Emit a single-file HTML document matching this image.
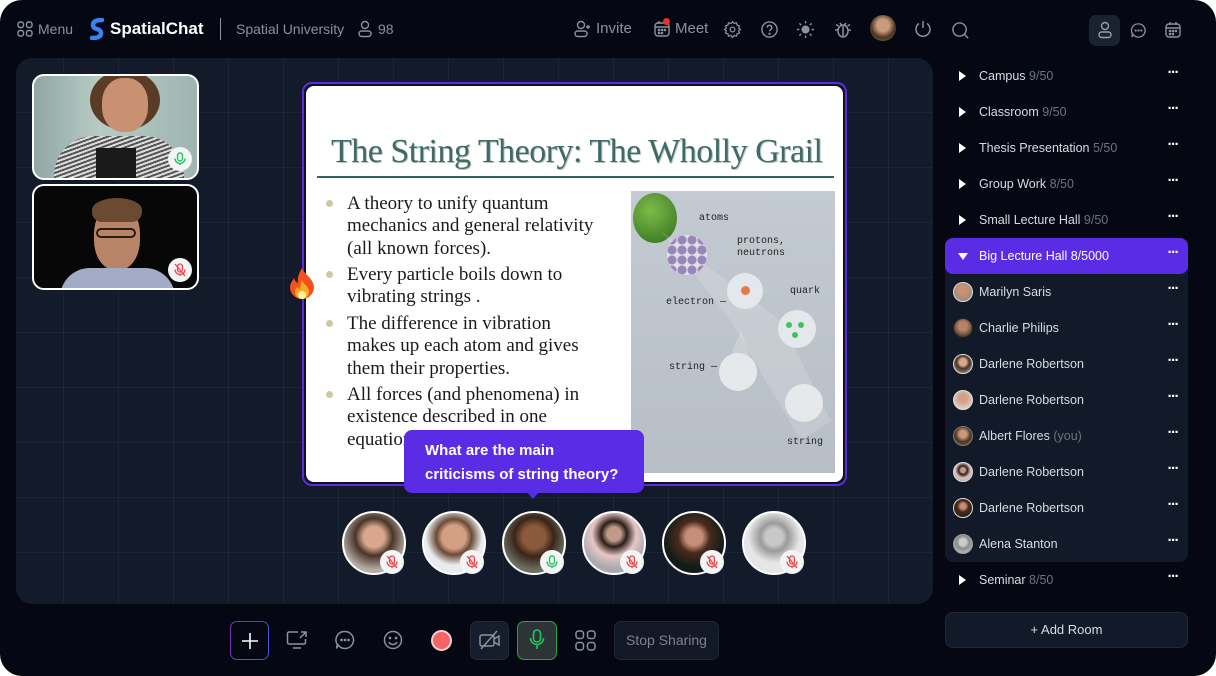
<!DOCTYPE html>
<html><head><meta charset="utf-8"><style>
*{margin:0;padding:0;box-sizing:border-box}
body{width:1216px;height:676px;background:#fff;font-family:"Liberation Sans",sans-serif;overflow:hidden;position:relative}
.app{position:absolute;left:0;top:0;width:1216px;height:676px;background:#050812;border-radius:22px;overflow:hidden}
.a{position:absolute}
.t{position:absolute;color:#8b919d;font-size:14px;white-space:nowrap}
.canvas{position:absolute;left:16px;top:58px;width:917px;height:546px;border-radius:16px;background-color:#131a2a;
background-image:linear-gradient(to right,rgba(255,255,255,.04) 1px,transparent 1px),linear-gradient(to bottom,rgba(255,255,255,.04) 1px,transparent 1px);
background-size:55px 55px;background-position:47px 54px}
.row{position:absolute;left:945px;width:243px;height:36px;font-size:12.5px;color:#d8dbe2}
.row .n{position:absolute;left:34px;top:11px;white-space:nowrap}
.row .n span{color:#6b7280}
.row .d{position:absolute;right:10px;top:6px;color:#fff;font-size:15px;letter-spacing:-1.5px;font-weight:bold}
.tri{position:absolute;left:14px;top:13px;width:0;height:0;border-left:7px solid #fff;border-top:5px solid transparent;border-bottom:5px solid transparent}
.av{position:absolute;left:8px;top:8px;width:20px;height:20px;border-radius:50%;border:1.5px solid #ddd}
.circ{position:absolute;top:511px;width:64px;height:64px;border-radius:50%;border:2px solid #fff}
.badge{position:absolute;width:24px;height:24px;border-radius:50%;background:#f3f4f6;display:flex;align-items:center;justify-content:center}
.bul{position:absolute;left:326px;width:7px;height:7px;border-radius:50%;background:#cfc9a1}
.sl{position:absolute;left:347px;font-family:"Liberation Serif",serif;font-size:19px;color:#1a1a1a;line-height:22.3px;white-space:nowrap}
</style></head><body><div class="app">
<svg class="a" style="left:17px;top:21px" width="16" height="16" viewBox="0 0 16 16" fill="none" stroke="#8b919d" stroke-width="1.4"><rect x="1" y="1" width="5.5" height="5.5" rx="2"/><rect x="9.5" y="1" width="5.5" height="5.5" rx="2"/><rect x="1" y="9.5" width="5.5" height="5.5" rx="2"/><rect x="9.5" y="9.5" width="5.5" height="5.5" rx="2"/></svg>
<div class="t" style="left:38px;top:21px">Menu</div>
<svg class="a" style="left:90px;top:18px" width="14" height="22" viewBox="0 0 14 22"><path d="M12 2 Q3 2 3 7 Q3 10 7 11 Q11 12 11 15 Q11 20 2 20" fill="none" stroke="#3b82f6" stroke-width="4.5" stroke-linecap="round"/></svg>
<div class="t" style="left:110px;top:19px;color:#fff;font-weight:bold;font-size:17px">SpatialChat</div>
<div class="a" style="left:220px;top:18px;width:1px;height:22px;background:#8b919d"></div>
<div class="t" style="left:236px;top:21px">Spatial University</div>
<svg class="a" style="left:357px;top:20px" width="16" height="18" viewBox="0 0 16 18" fill="none" stroke="#8b919d" stroke-width="1.4"><circle cx="8" cy="5" r="3.5"/><rect x="2" y="11" width="12" height="5.5" rx="2.7"/></svg>
<div class="t" style="left:378px;top:21px">98</div>
<svg class="a" style="left:573px;top:20px" width="20" height="18" viewBox="0 0 20 18" fill="none" stroke="#8b919d" stroke-width="1.4"><circle cx="8" cy="5" r="3.5"/><rect x="2" y="11" width="12" height="5.5" rx="2.7"/><path d="M15 5v4M13 7h4"/></svg>
<div class="t" style="left:596px;top:20px;font-size:15px">Invite</div>
<svg class="a" style="left:653px;top:20px" width="18" height="18" viewBox="0 0 18 18" fill="none" stroke="#8b919d" stroke-width="1.4"><rect x="2" y="3" width="14" height="13" rx="3"/><path d="M2 7h14M6 1v3M12 1v3"/><circle cx="6" cy="10" r=".6"/><circle cx="9" cy="10" r=".6"/><circle cx="12" cy="10" r=".6"/><circle cx="6" cy="13" r=".6"/><circle cx="9" cy="13" r=".6"/></svg>
<div class="a" style="left:663px;top:18px;width:7px;height:7px;border-radius:50%;background:#ef2b2b"></div>
<div class="t" style="left:675px;top:20px;font-size:15px">Meet</div>
<svg class="a" style="left:723px;top:20px" width="19" height="19" viewBox="0 0 24 24" fill="none" stroke="#8b919d" stroke-width="1.6"><circle cx="12" cy="12" r="3"/><path d="M12 2l2 2.5 3-1 .8 3 3 .9-1 3L22 12l-2.2 1.6 1 3-3 .9-.8 3-3-1L12 22l-2-2.5-3 1-.8-3-3-.9 1-3L2 12l2.2-1.6-1-3 3-.9.8-3 3 1z"/></svg>
<svg class="a" style="left:760px;top:20px" width="19" height="19" viewBox="0 0 20 20" fill="none" stroke="#8b919d" stroke-width="1.5"><circle cx="10" cy="10" r="8"/><path d="M7.6 8a2.4 2.4 0 1 1 3.4 2.2c-.7.4-1 .9-1 1.6"/><circle cx="10" cy="14.5" r=".5" fill="#8b919d"/></svg>
<svg class="a" style="left:796px;top:20px" width="19" height="19" viewBox="0 0 20 20" fill="#8b919d" stroke="#8b919d" stroke-width="1.5"><circle cx="10" cy="10" r="3.5"/><path d="M10 1v2.5M10 16.5V19M1 10h2.5M16.5 10H19M3.6 3.6l1.8 1.8M14.6 14.6l1.8 1.8M3.6 16.4l1.8-1.8M14.6 5.4l1.8-1.8"/></svg>
<svg class="a" style="left:834px;top:19px" width="18" height="20" viewBox="0 0 18 20" fill="none" stroke="#8b919d" stroke-width="1.5"><ellipse cx="9" cy="12" rx="5" ry="6"/><path d="M6 4l1.5 2M12 4l-1.5 2M4 11H1M17 11h-3M4.5 7 2 5.5M13.5 7 16 5.5M9 7v10"/></svg>
<div class="a" style="left:870px;top:15px;width:26px;height:26px;border-radius:50%;background:radial-gradient(circle at 50% 40%,#c99a7c 0 30%,#4a3322 60%,#7a7b5a)"></div>
<svg class="a" style="left:913px;top:19px" width="20" height="20" viewBox="0 0 20 20" fill="none" stroke="#8b919d" stroke-width="1.5"><path d="M10 2v7M6 4.5a7 7 0 1 0 8 0"/></svg>
<svg class="a" style="left:951px;top:21px" width="19" height="19" viewBox="0 0 20 20" fill="none" stroke="#8b919d" stroke-width="1.5"><circle cx="9" cy="9" r="7"/><path d="M14 14l4 4"/></svg>
<div class="a" style="left:1089px;top:15px;width:31px;height:31px;border-radius:7px;background:#1a2130"></div>
<svg class="a" style="left:1097px;top:21px" width="16" height="18" viewBox="0 0 16 18" fill="none" stroke="#9aa0ab" stroke-width="1.4"><circle cx="8" cy="5" r="3.5"/><rect x="2" y="11" width="12" height="5.5" rx="2.7"/></svg>
<svg class="a" style="left:1130px;top:22px" width="17" height="17" viewBox="0 0 18 18" fill="none" stroke="#8b919d" stroke-width="1.4"><path d="M9 2a7 7 0 1 1-5.6 11.2L2 16l.6-3.4A7 7 0 0 1 9 2z"/><circle cx="6" cy="9" r=".5"/><circle cx="9" cy="9" r=".5"/><circle cx="12" cy="9" r=".5"/></svg>
<svg class="a" style="left:1164px;top:21px" width="18" height="18" viewBox="0 0 18 18" fill="none" stroke="#8b919d" stroke-width="1.4"><rect x="2" y="3" width="14" height="13" rx="3"/><path d="M2 7h14M6 1v3M12 1v3"/><circle cx="6" cy="10" r=".6"/><circle cx="9" cy="10" r=".6"/><circle cx="12" cy="10" r=".6"/><circle cx="6" cy="13" r=".6"/><circle cx="9" cy="13" r=".6"/></svg>

<div class="canvas"></div>
<div class="a" style="left:32px;top:74px;width:167px;height:106px;border-radius:12px;border:2px solid #fff;overflow:hidden;background:linear-gradient(90deg,#8fa8a4,#b8cac6 40%,#9fb5b1)">
 <div class="a" style="left:56px;top:-6px;width:70px;height:60px;border-radius:50%;background:#5a3b26"></div>
 <div class="a" style="left:68px;top:2px;width:46px;height:54px;border-radius:45%;background:#c99072"></div>
 <div class="a" style="left:20px;top:60px;width:130px;height:60px;border-radius:40px 40px 0 0;background:repeating-linear-gradient(160deg,#ddd 0 2px,#555 2px 4px)"></div>
 <div class="a" style="left:62px;top:72px;width:40px;height:40px;background:#1a1a1a"></div>
</div>
<div class="badge" style="left:168px;top:147px"><svg width="12" height="14" viewBox="0 0 12 14" fill="none" stroke="#22c55e" stroke-width="1.4"><rect x="3.5" y="1" width="5" height="8" rx="2.5"/><path d="M1 6.5a5 5 0 0 0 10 0M6 11.5V13"/></svg></div>
<div class="a" style="left:32px;top:184px;width:167px;height:106px;border-radius:12px;border:2px solid #fff;overflow:hidden;background:#070707">
 <div class="a" style="left:60px;top:18px;width:46px;height:66px;border-radius:45%;background:#b88468"></div>
 <div class="a" style="left:58px;top:12px;width:50px;height:24px;border-radius:50% 50% 10px 10px;background:#6a4a30"></div>
 <div class="a" style="left:62px;top:42px;width:40px;height:10px;border:2px solid #2a1a12;border-radius:5px"></div>
 <div class="a" style="left:26px;top:82px;width:115px;height:30px;border-radius:30px 30px 0 0;background:#a3acc4"></div>
</div>
<div class="badge" style="left:168px;top:258px"><svg width="14" height="14" viewBox="0 0 14 14" fill="none" stroke="#ef4444" stroke-width="1.3"><rect x="4.5" y="1" width="5" height="8" rx="2.5"/><path d="M2 6.5a5 5 0 0 0 10 0M7 11.5V13M2 1l10 12"/></svg></div>
<div class="a" style="left:302px;top:82px;width:545px;height:404px;border-radius:10px;border:2px solid #5b2be0;background:#0e1220"></div>
<div class="a" style="left:306px;top:86px;width:537px;height:396px;border-radius:8px;background:#fff"></div>
<svg class="a" style="left:286px;top:266px" width="32" height="36" viewBox="0 0 32 36"><path d="M16 2c2 6 10 9 12 18a12 12 0 0 1-24 2c0-5 3-8 4-10 1 3 2 4 4 5-1-7 2-11 4-15z" fill="#f4511e"/><path d="M16 14c1 4 7 6 7 12a7 7 0 0 1-14 0c0-3 2-5 3-6 0 2 1 3 2 3 0-4 1-7 2-9z" fill="#ffa726"/><ellipse cx="16" cy="29" rx="4" ry="4" fill="#fff59d"/></svg>
<div class="a" style="left:331px;top:133px;font-family:'Liberation Serif',serif;font-size:34px;color:#3f6b66;white-space:nowrap;text-shadow:1px 1px 0 #b5c5c2;letter-spacing:-.5px">The String Theory: The Wholly Grail</div>
<div class="a" style="left:317px;top:176px;width:517px;height:2px;background:#2f6462"></div>
<div class="bul" style="top:200px"></div><div class="sl" style="top:193px">A theory to unify quantum<br>mechanics and general relativity<br>(all known forces).</div>
<div class="bul" style="top:271px"></div><div class="sl" style="top:264px">Every particle boils down to<br>vibrating strings .</div>
<div class="bul" style="top:320px"></div><div class="sl" style="top:313px">The difference in vibration<br>makes up each atom and gives<br>them their properties.</div>
<div class="bul" style="top:391px"></div><div class="sl" style="top:384px">All forces (and phenomena) in<br>existence described in one<br>equation.</div>
<div class="a" style="left:631px;top:191px;width:204px;height:282px;background:linear-gradient(180deg,#c3cad1,#b7bec6);overflow:hidden;font-family:'Liberation Mono',monospace;font-size:10px;color:#222">
 <div class="a" style="left:2px;top:2px;width:44px;height:50px;border-radius:50%;background:radial-gradient(circle at 40% 35%,#7dbb4a,#2f6e1c)"></div>
 <svg class="a" style="left:0;top:0" width="204" height="282"><path d="M30 40 L150 130 L200 230 L170 250 L100 130 Z" fill="#fff" opacity=".15"/><path d="M110 140 L120 170 L95 175 Z" fill="#fff" opacity=".2"/></svg>
 <div class="a" style="left:36px;top:44px;width:40px;height:40px;border-radius:50%;background:radial-gradient(circle,#9a85b8 0 4px,transparent 5px) 0 0/10px 10px,#dfe3e8"></div>
 <div class="a" style="left:96px;top:82px;width:36px;height:36px;border-radius:50%;background:#e4e7eb"></div>
 <div class="a" style="left:110px;top:95px;width:9px;height:9px;border-radius:50%;background:#e57a45"></div>
 <div class="a" style="left:147px;top:119px;width:38px;height:38px;border-radius:50%;background:#e4e7eb"></div>
 <div class="a" style="left:155px;top:131px;width:6px;height:6px;border-radius:50%;background:#3fc45b;box-shadow:12px 0 #3fc45b,6px 10px #3fc45b"></div>
 <div class="a" style="left:88px;top:162px;width:38px;height:38px;border-radius:50%;background:#e6e9ec"></div>
 <div class="a" style="left:154px;top:193px;width:38px;height:38px;border-radius:50%;background:#e6e9ec"></div>
 <div class="a" style="left:68px;top:22px">atoms</div>
 <div class="a" style="left:106px;top:45px;line-height:12px">protons,<br>neutrons</div>
 <div class="a" style="left:35px;top:106px">electron —</div>
 <div class="a" style="left:159px;top:95px">quark</div>
 <div class="a" style="left:38px;top:171px">string —</div>
 <div class="a" style="left:156px;top:246px">string</div>
</div>
<div class="a" style="left:404px;top:430px;width:240px;height:63px;border-radius:8px;background:#5a2ce6;color:#fff;font-size:15px;font-weight:bold;line-height:24px;padding:9px 0 0 21px">What are the main<br>criticisms of string theory?</div>
<div class="a" style="left:527px;top:492px;width:0;height:0;border-left:6px solid transparent;border-right:6px solid transparent;border-top:7px solid #5a2ce6"></div>
<div class="circ" style="left:342px;background:radial-gradient(circle at 50% 40%,#d9a78e 0 22%,#4a3528 40%,#b5aca5 70%)"></div>
<div class="circ" style="left:422px;background:radial-gradient(circle at 50% 40%,#d4a085 0 25%,#6b4a35 38%,#e8ecef 60%)"></div>
<div class="circ" style="left:502px;background:radial-gradient(circle at 50% 40%,#8a5a3c 0 24%,#3a2518 42%,#6a7060 70%)"></div>
<div class="circ" style="left:582px;background:radial-gradient(circle at 50% 35%,#c09a88 0 14%,#2a1d18 26%,#e8c6c6 45%,#a9a9ae 70%)"></div>
<div class="circ" style="left:662px;background:radial-gradient(circle at 50% 40%,#c48e78 0 18%,#4a2a1c 34%,#0f1c18 65%)"></div>
<div class="circ" style="left:742px;background:radial-gradient(circle at 50% 40%,#c8c8c8 0 18%,#9a9a9a 30%,#e6e6e6 55%)"></div>
<div class="badge" style="left:380px;top:550px"><svg width="14" height="14" viewBox="0 0 14 14" fill="none" stroke="#ef4444" stroke-width="1.3"><rect x="4.5" y="1" width="5" height="8" rx="2.5"/><path d="M2 6.5a5 5 0 0 0 10 0M7 11.5V13M2 1l10 12"/></svg></div>
<div class="badge" style="left:460px;top:550px"><svg width="14" height="14" viewBox="0 0 14 14" fill="none" stroke="#ef4444" stroke-width="1.3"><rect x="4.5" y="1" width="5" height="8" rx="2.5"/><path d="M2 6.5a5 5 0 0 0 10 0M7 11.5V13M2 1l10 12"/></svg></div>
<div class="badge" style="left:540px;top:550px"><svg width="12" height="14" viewBox="0 0 12 14" fill="none" stroke="#22c55e" stroke-width="1.4"><rect x="3.5" y="1" width="5" height="8" rx="2.5"/><path d="M1 6.5a5 5 0 0 0 10 0M6 11.5V13"/></svg></div>
<div class="badge" style="left:620px;top:550px"><svg width="14" height="14" viewBox="0 0 14 14" fill="none" stroke="#ef4444" stroke-width="1.3"><rect x="4.5" y="1" width="5" height="8" rx="2.5"/><path d="M2 6.5a5 5 0 0 0 10 0M7 11.5V13M2 1l10 12"/></svg></div>
<div class="badge" style="left:700px;top:550px"><svg width="14" height="14" viewBox="0 0 14 14" fill="none" stroke="#ef4444" stroke-width="1.3"><rect x="4.5" y="1" width="5" height="8" rx="2.5"/><path d="M2 6.5a5 5 0 0 0 10 0M7 11.5V13M2 1l10 12"/></svg></div>
<div class="badge" style="left:780px;top:550px"><svg width="14" height="14" viewBox="0 0 14 14" fill="none" stroke="#ef4444" stroke-width="1.3"><rect x="4.5" y="1" width="5" height="8" rx="2.5"/><path d="M2 6.5a5 5 0 0 0 10 0M7 11.5V13M2 1l10 12"/></svg></div>
<div class="a" style="left:230px;top:621px;width:39px;height:39px;border-radius:7px;border:1.5px solid;border-color:#7b2fb8 #4a55e0 #3a5ae8 #7b2fb8"></div>
<svg class="a" style="left:240px;top:631px" width="20" height="20" viewBox="0 0 20 20" stroke="#fff" stroke-width="1.6"><path d="M10 2v16M2 10h16"/></svg>
<svg class="a" style="left:286px;top:630px" width="22" height="20" viewBox="0 0 22 20" fill="none" stroke="#8b919d" stroke-width="1.5"><path d="M12 2H3a1.5 1.5 0 0 0-1.5 1.5v9A1.5 1.5 0 0 0 3 14h15a1.5 1.5 0 0 0 1.5-1.5V9M7 18h8M15 2h5v5M20 2l-6 6"/></svg>
<svg class="a" style="left:335px;top:630px" width="20" height="20" viewBox="0 0 20 20" fill="none" stroke="#8b919d" stroke-width="1.5"><path d="M10 1.5a8.5 8.5 0 1 1-6.8 13.6L1.5 18.5l.8-4A8.5 8.5 0 0 1 10 1.5z"/><circle cx="6.5" cy="10" r=".6"/><circle cx="10" cy="10" r=".6"/><circle cx="13.5" cy="10" r=".6"/></svg>
<svg class="a" style="left:383px;top:630px" width="20" height="20" viewBox="0 0 20 20" fill="none" stroke="#8b919d" stroke-width="1.5"><circle cx="10" cy="10" r="8.5"/><path d="M6 12a4.5 4.5 0 0 0 8 0"/><circle cx="7" cy="8" r=".6"/><circle cx="13" cy="8" r=".6"/></svg>
<div class="a" style="left:431px;top:630px;width:21px;height:21px;border-radius:50%;background:#f26467;border:2px solid #fbd0cf"></div>
<div class="a" style="left:470px;top:621px;width:39px;height:39px;border-radius:7px;background:#161d2c;border:1px solid #222a3a"></div>
<svg class="a" style="left:478px;top:630px" width="24" height="20" viewBox="0 0 24 20" fill="none" stroke="#8b919d" stroke-width="1.5"><rect x="2" y="5" width="14" height="11" rx="2"/><path d="M16 9l5-3v9l-5-3M3 19L19 1"/></svg>
<div class="a" style="left:517px;top:621px;width:40px;height:39px;border-radius:7px;background:#2d3436;border:1.5px solid #22a447"></div>
<svg class="a" style="left:529px;top:628px" width="16" height="24" viewBox="0 0 16 24" fill="none" stroke="#22c55e" stroke-width="1.6"><rect x="4.5" y="2" width="7" height="12" rx="3.5"/><path d="M1.5 10a6.5 6.5 0 0 0 13 0M8 16.5V21"/></svg>
<svg class="a" style="left:575px;top:630px" width="21" height="21" viewBox="0 0 21 21" fill="none" stroke="#8b919d" stroke-width="1.5"><rect x="1" y="1" width="7.5" height="7.5" rx="2.5"/><rect x="12.5" y="1" width="7.5" height="7.5" rx="2.5"/><rect x="1" y="12.5" width="7.5" height="7.5" rx="2.5"/><rect x="12.5" y="12.5" width="7.5" height="7.5" rx="2.5"/></svg>
<div class="a" style="left:614px;top:621px;width:105px;height:39px;border-radius:7px;background:#121826;border:1px solid #1f2636;color:#7c828e;font-size:14px;line-height:37px;text-align:center">Stop Sharing</div>
<div class="a" style="left:945px;top:238px;width:243px;height:324px;border-radius:8px;background:#121a29"></div>
<div class="a" style="left:945px;top:238px;width:243px;height:36px;border-radius:8px;background:#5a2ce6"></div>
<div class="row" style="top:58px"><div class="tri"></div><div class="n">Campus <span>9/50</span></div><div class="d">···</div></div>
<div class="row" style="top:94px"><div class="tri"></div><div class="n">Classroom <span>9/50</span></div><div class="d">···</div></div>
<div class="row" style="top:130px"><div class="tri"></div><div class="n">Thesis Presentation <span>5/50</span></div><div class="d">···</div></div>
<div class="row" style="top:166px"><div class="tri"></div><div class="n">Group Work <span>8/50</span></div><div class="d">···</div></div>
<div class="row" style="top:202px"><div class="tri"></div><div class="n">Small Lecture Hall <span>9/50</span></div><div class="d">···</div></div>
<div class="row" style="top:238px;color:#fff"><div class="tri" style="left:13px;top:15px;border-left:5px solid transparent;border-right:5px solid transparent;border-top:7px solid #fff;border-bottom:0"></div><div class="n">Big Lecture Hall 8/5000</div><div class="d">···</div></div>
<div class="row" style="top:274px"><div class="av" style="background:radial-gradient(circle at 50% 40%,#c99072 0 30%,#7a8a86)"></div><div class="n">Marilyn Saris</div><div class="d">···</div></div>
<div class="row" style="top:310px"><div class="av" style="border-color:#222;background:radial-gradient(circle at 50% 40%,#b88468 0 30%,#111)"></div><div class="n">Charlie Philips</div><div class="d">···</div></div>
<div class="row" style="top:346px"><div class="av" style="background:radial-gradient(circle at 50% 40%,#d9a78e 0 25%,#4a3528 45%,#b5aca5)"></div><div class="n">Darlene Robertson</div><div class="d">···</div></div>
<div class="row" style="top:382px"><div class="av" style="background:radial-gradient(circle at 50% 40%,#d4a085 0 30%,#e8ecef)"></div><div class="n">Darlene Robertson</div><div class="d">···</div></div>
<div class="row" style="top:418px"><div class="av" style="border-color:#777;background:radial-gradient(circle at 50% 40%,#c99a7c 0 25%,#4a3322 55%,#7a7b5a)"></div><div class="n">Albert Flores <span>(you)</span></div><div class="d">···</div></div>
<div class="row" style="top:454px"><div class="av" style="background:radial-gradient(circle at 50% 40%,#c09a88 0 18%,#2a1d18 30%,#e0c0c0 55%,#999)"></div><div class="n">Darlene Robertson</div><div class="d">···</div></div>
<div class="row" style="top:490px"><div class="av" style="background:radial-gradient(circle at 50% 40%,#c48e78 0 20%,#4a2a1c 40%,#0f1c18)"></div><div class="n">Darlene Robertson</div><div class="d">···</div></div>
<div class="row" style="top:526px"><div class="av" style="border-color:#999;background:radial-gradient(circle at 50% 40%,#ccc 0 25%,#888 45%,#ddd)"></div><div class="n">Alena Stanton</div><div class="d">···</div></div>
<div class="row" style="top:562px"><div class="tri"></div><div class="n">Seminar <span>8/50</span></div><div class="d">···</div></div>
<div class="a" style="left:945px;top:612px;width:243px;height:36px;border-radius:8px;background:#121a29;border:1px solid #222a3a;color:#d8dbe2;font-size:13px;text-align:center;line-height:34px">+ Add Room</div>
</div></body></html>
